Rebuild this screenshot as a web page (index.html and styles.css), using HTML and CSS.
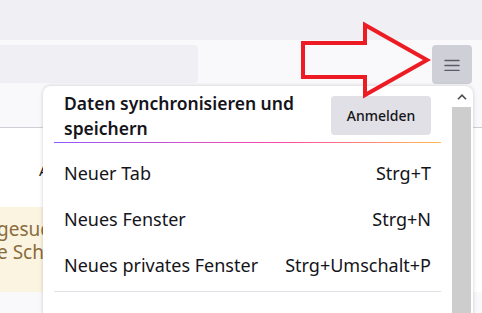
FILE: index.html
```html
<!DOCTYPE html>
<html lang="de">
<head>
  <meta charset="UTF-8" />
  <title>Menü</title>
  <link rel="stylesheet" href="styles.css">
</head>
<body>
  <div class="tabstrip"></div>

  <div class="navbar">
    <div class="urlbar"></div>
    <button class="menu-btn" aria-label="Menü öffnen">
      <svg width="16" height="12" viewBox="0 0 16 12">
        <path d="M1 1.5h14M1 6.5h14M1 11.5h14" stroke="#5b5b66" stroke-width="1.5" stroke-linecap="round" fill="none"/>
      </svg>
    </button>
  </div>

  <div class="page">
    <div class="page-top">A</div>
    <div class="notice">
      <p>gesuc</p>
      <p>e Sch</p>
    </div>
    <div class="page-bottom"></div>
  </div>

  <div class="panel">
    <div class="panel-main">
      <div class="sync">
        <div class="sync-title">Daten synchronisieren und speichern</div>
        <button class="sync-btn">Anmelden</button>
      </div>
      <div class="sync-line"></div>

      <ul class="items">
        <li class="item"><span>Neuer Tab</span><span>Strg+T</span></li>
        <li class="item"><span>Neues Fenster</span><span>Strg+N</span></li>
        <li class="item"><span>Neues privates Fenster</span><span>Strg+Umschalt+P</span></li>
      </ul>
      <div class="separator"></div>
    </div>

    <div class="scrollbar">
      <div class="scroll-up">
        <svg width="10" height="6" viewBox="0 0 10 6">
          <path d="M1 5.2L5 1.2L9 5.2" stroke="#4a4a52" stroke-width="1.6" fill="none"/>
        </svg>
      </div>
      <div class="scroll-thumb"></div>
    </div>
  </div>

  <!-- red marker arrow pointing at the menu button -->
  <svg class="marker" width="136" height="84" viewBox="0 0 136 84">
    <polygon points="3,23 65,23 65,5 127,40 65,75 65,57 3,57" fill="none" stroke="#ed1c24" stroke-width="4" stroke-linejoin="miter"/>
  </svg>
</body>
</html>
```

FILE: styles.css
```css
body {
  margin: 0;
  width: 482px;
  height: 313px;
  overflow: hidden;
  position: relative;
  background-color: #fff;
  font-family: "Noto Sans", "Open Sans", sans-serif;
  color: #15141a;
}

.tabstrip {
  height: 40px;
  background-color: #f0f0f4;
}

.navbar {
  height: 82px;
  padding: 5px 10px 0 0;
  display: flex;
  justify-content: space-between;
  align-items: flex-start;
  background-color: #f9f9fb;
  border-bottom: 1px solid #cfcfd8;
}

.urlbar {
  width: 198px;
  height: 38px;
  background-color: #f0f0f4;
  border-radius: 0 4px 4px 0;
}

.menu-btn {
  width: 40px;
  height: 39px;
  padding: 0;
  border: none;
  border-radius: 4px;
  background-color: #cfcfd8;
  display: flex;
  justify-content: center;
  align-items: center;
}

.page-top {
  height: 79px;
  padding-left: 39px;
  box-sizing: border-box;
  padding-top: 32px;
  font-size: 15px;
  color: #15141a;
}

.notice {
  width: 43px;
  height: 85px;
  box-sizing: border-box;
  padding-top: 11px;
  overflow: hidden;
  white-space: nowrap;
  background-color: #fbf4e1;
  color: #8a6b3c;
  font-size: 19px;
  line-height: 23px;
}

.notice p {
  margin: 0 0 0 -3px;
}

.page-bottom {
  height: 40px;
  background-color: #f9f9fb;
}

.panel {
  position: absolute;
  left: 43px;
  top: 86px;
  width: 430px;
  height: 240px;
  display: flex;
  background-color: #fff;
  border-radius: 8px;
  box-shadow: 0 0 4px rgba(0, 0, 0, 0.18);
}

.panel-main {
  flex: 1;
  padding: 0 11px;
}

.sync {
  display: flex;
  justify-content: space-between;
  align-items: flex-start;
  padding: 5px 10px 0 10px;
}

.sync-title {
  width: 250px;
  font-size: 17.5px;
  font-weight: 600;
  line-height: 25px;
}

.sync-btn {
  margin-top: 5px;
  width: 100px;
  height: 39px;
  border: none;
  border-radius: 4px;
  background-color: #e0e0e6;
  font-family: inherit;
  font-size: 14px;
  font-weight: 500;
  color: #15141a;
}

.sync-line {
  height: 1px;
  margin-top: 1px;
  background: linear-gradient(90deg, #9059ff, #ff4aa2 60%, #ffbd4f);
}

.items {
  list-style: none;
  margin: 7px 0 0 0;
  padding: 0;
}

.item {
  height: 46px;
  padding: 0 10px;
  display: flex;
  justify-content: space-between;
  align-items: center;
  font-size: 18px;
}

.separator {
  height: 1px;
  margin-top: 3px;
  background-color: #e0e0e6;
}

.scrollbar {
  width: 19px;
  margin-right: 2px;
  display: flex;
  flex-direction: column;
}

.scroll-up {
  height: 21px;
  display: flex;
  justify-content: center;
  align-items: center;
}

.scroll-thumb {
  flex: 1;
  background-color: #cdcdcd;
}

.marker {
  position: absolute;
  left: 300px;
  top: 20px;
}
```
